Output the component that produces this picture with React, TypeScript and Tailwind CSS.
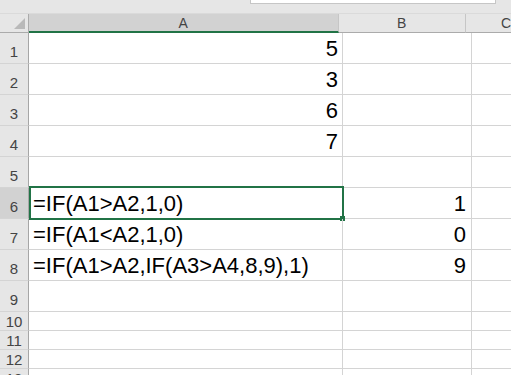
const rows: { n: number; a?: string; b?: string; alignA?: "left" | "right"; h: string }[] = [
  { n: 1, a: "5", alignA: "right", h: "h-[31px]" },
  { n: 2, a: "3", alignA: "right", h: "h-[31px]" },
  { n: 3, a: "6", alignA: "right", h: "h-[31px]" },
  { n: 4, a: "7", alignA: "right", h: "h-[31px]" },
  { n: 5, h: "h-[31px]" },
  { n: 6, a: "=IF(A1>A2,1,0)", b: "1", alignA: "left", h: "h-[31px]" },
  { n: 7, a: "=IF(A1<A2,1,0)", b: "0", alignA: "left", h: "h-[31px]" },
  { n: 8, a: "=IF(A1>A2,IF(A3>A4,8,9),1)", b: "9", alignA: "left", h: "h-[31px]" },
  { n: 9, h: "h-[31px]" },
  { n: 10, h: "h-[19px]" },
  { n: 11, h: "h-[19px]" },
  { n: 12, h: "h-[19px]" },
  { n: 13, h: "h-[19px]" },
];

const font = "font-['Liberation_Sans',Arial,sans-serif]";

export default function App() {
  return (
    <div className={`h-[375px] w-[511px] overflow-hidden bg-white ${font}`}>
      {/* top strip with the edge of the name box */}
      <div className="relative h-[14px] border-b border-[#dadada] bg-[#e6e6e6]">
        <div className="absolute left-[250px] top-0 h-[4px] w-[246px] border-x border-b border-[#c6c6c6] bg-white" />
      </div>

      {/* column headers */}
      <div className="flex h-[19px] text-[14px] leading-none text-[#444]">
        <div className="relative w-[29px] border-b border-r border-[#ababab] bg-[#e6e6e6]">
          <svg className="absolute bottom-[3px] right-[3px]" width="11" height="11" viewBox="0 0 11 11">
            <polygon points="11,0 11,11 0,11" fill="#b9b9b9" />
          </svg>
        </div>
        <div className="flex w-[314px] items-end justify-center border-b-2 border-r border-b-[#217346] border-r-[#c6c6c6] bg-[#d2d2d2] pb-[1px]">
          A
        </div>
        <div className="flex w-[129px] items-end justify-center border-b border-r border-b-[#ababab] border-r-[#c6c6c6] bg-[#e6e6e6] pb-[2px]">
          B
        </div>
        <div className="flex flex-1 items-end border-b border-[#ababab] bg-[#e6e6e6] pb-[2px] pl-[35px]">
          C
        </div>
      </div>

      {rows.map((r) => (
        <div key={r.n} className={`flex ${r.h}`}>
          <div
            className={`flex w-[29px] items-end justify-center border-b border-r border-b-[#d4d4d4] border-r-[#a6a6a6] text-[15px] leading-none text-[#444] ${
              r.h === "h-[31px]" ? "pb-[4px]" : "pb-[1px]"
            } ${r.n === 6 ? "bg-[#d2d2d2]" : "bg-[#e6e6e6]"}`}
          >
            {r.n}
          </div>
          <div
            className={`relative flex w-[314px] items-end border-b border-r border-[#d4d4d4] pb-[3px] text-[22px] leading-none text-black ${
              r.alignA === "right" ? "justify-end pr-[4px]" : "justify-start pl-[4px]"
            }`}
          >
            <span className="whitespace-nowrap">{r.a}</span>
            {r.n === 6 && (
              <>
                <div className="absolute left-0 top-[-2px] h-[34px] w-[315px] border-2 border-[#217346]" />
                <div className="absolute left-[311px] top-[28px] h-[5px] w-[5px] bg-[#217346]" />
              </>
            )}
          </div>
          <div className="flex w-[129px] items-end justify-end border-b border-r border-[#d4d4d4] pb-[3px] pr-[5px] text-[22px] leading-none text-black">
            {r.b}
          </div>
          <div className="flex-1 border-b border-[#d4d4d4]" />
        </div>
      ))}
    </div>
  );
}
